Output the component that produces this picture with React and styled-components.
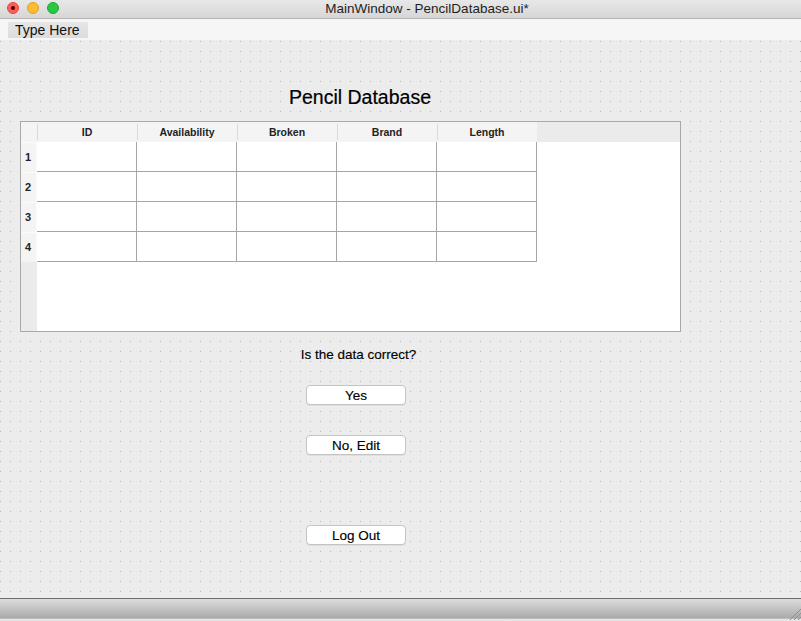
import styled, { createGlobalStyle } from "styled-components";

const COLUMNS = ["ID", "Availability", "Broken", "Brand", "Length"];
const ROWS = [1, 2, 3, 4];

const GlobalStyle = createGlobalStyle`
  * { box-sizing: border-box; }
  html, body { margin: 0; padding: 0; background: #ececec; }
  body { font-family: "Liberation Sans", Arial, sans-serif; color: #1a1a1a; }
`;

export default function App() {
  return (
    <Window>
      <GlobalStyle />
      <TitleBar>
        <Lights>
          <Light $color="#fc5f57" $edge="#de4a43" $dot />
          <Light $color="#fdbc2e" $edge="#dea124" />
          <Light $color="#28c840" $edge="#1fa934" />
        </Lights>
        <WindowTitle>MainWindow - PencilDatabase.ui*</WindowTitle>
      </TitleBar>

      <MenuBar>
        <MenuItem>Type Here</MenuItem>
      </MenuBar>

      <Canvas>
        <Heading>Pencil Database</Heading>

        <Table>
          <Corner />
          {COLUMNS.map((name) => (
            <HeaderCell key={name}>{name}</HeaderCell>
          ))}
          <HeaderFiller />

          {ROWS.map((row) => [
            <RowHeader key={`h${row}`}>{row}</RowHeader>,
            ...COLUMNS.map((name) => <Cell key={`${row}-${name}`} />),
            row === 1 ? <SideFiller key="side" /> : null,
          ])}

          <RowHeaderFiller />
          <BodyFiller />
        </Table>

        <Prompt>Is the data correct?</Prompt>
        <Button $gap={22}>Yes</Button>
        <Button $gap={30}>No, Edit</Button>
        <Button $gap={70}>Log Out</Button>
      </Canvas>

      <StatusBar>
        <Grip width="12" height="14" viewBox="0 0 12 14">
          <path d="M12 3 L1 14 M12 7 L5 14 M12 11 L9 14" stroke="#8e8e8e" strokeWidth="1" />
        </Grip>
      </StatusBar>
    </Window>
  );
}

const Window = styled.div`
  width: 801px;
  height: 621px;
  display: flex;
  flex-direction: column;
  background: #ececec;
  overflow: hidden;
`;

const TitleBar = styled.div`
  height: 19px;
  flex: none;
  display: flex;
  align-items: center;
  position: relative;
  background: linear-gradient(#e8e8e8, #d6d6d6);
  border-bottom: 1px solid #b4b4b4;
`;

const Lights = styled.div`
  position: absolute;
  left: 7px;
  top: 2px;
  display: flex;
  gap: 8px;
`;

const Light = styled.span`
  width: 12px;
  height: 12px;
  border-radius: 50%;
  background: ${({ $color }) => $color};
  border: 1px solid ${({ $edge }) => $edge};
  display: flex;
  align-items: center;
  justify-content: center;

  &::after {
    content: "";
    width: 4px;
    height: 4px;
    border-radius: 50%;
    background: ${({ $dot }) => ($dot ? "#4d0000" : "transparent")};
  }
`;

const WindowTitle = styled.div`
  flex: 1;
  text-align: center;
  padding-left: 53px;
  font-size: 13.5px;
  color: #1e1e1e;
  line-height: 18px;
`;

const MenuBar = styled.div`
  height: 21px;
  flex: none;
  display: flex;
  align-items: center;
  padding: 0 8px;
  background: #f6f6f6;
`;

const MenuItem = styled.div`
  width: 80px;
  height: 16px;
  padding-left: 7px;
  font-size: 14px;
  line-height: 16px;
  color: #111;
  background: linear-gradient(#e6e6e6, #dcdcdc);
`;

const Canvas = styled.div`
  flex: 1;
  display: flex;
  flex-direction: column;
  align-items: flex-start;
  padding-left: 20px;
  background-color: #ececec;
  background-image: radial-gradient(circle at 0.5px 0.5px, #b6b6b6 0.5px, transparent 0.9px);
  background-size: 10px 10px;
  background-position: 0 1px;
`;

const Heading = styled.div`
  margin-top: 45px;
  width: 680px;
  height: 24px;
  text-align: center;
  font-size: 19.5px;
  line-height: 24px;
  color: #000;
  -webkit-text-stroke: 0.2px #000;
`;

const Table = styled.div`
  margin-top: 12px;
  width: 661px;
  height: 211px;
  display: grid;
  grid-template-columns: 16px repeat(5, 100px) 1fr;
  grid-template-rows: 20px repeat(4, 30px) 1fr;
  border: 1px solid #a9a9a9;
  background: #fff;
`;

const Corner = styled.div`
  background: #f4f4f4;
`;

const HeaderCell = styled.div`
  position: relative;
  background: #f4f4f4;
  font-size: 10.5px;
  font-weight: 700;
  color: #222;
  display: flex;
  align-items: center;
  justify-content: center;

  &::before {
    content: "";
    position: absolute;
    left: 0;
    top: 2px;
    bottom: 2px;
    width: 1px;
    background: #dadada;
  }
`;

const HeaderFiller = styled.div`
  background: #ebebeb;
`;

const RowHeader = styled.div`
  background: #f4f4f4;
  border-right: 1px solid #fbfbfb;
  border-top: 1px solid #fbfbfb;
  font-size: 11px;
  font-weight: 700;
  color: #222;
  display: flex;
  align-items: center;
  padding-left: 4px;
  padding-bottom: 1px;
`;

const Cell = styled.div`
  background: #fff;
  border-right: 1px solid #a6a6a6;
  border-bottom: 1px solid #a6a6a6;
`;

const SideFiller = styled.div`
  grid-column: 7;
  grid-row: 2 / 6;
  background: #fff;
`;

const RowHeaderFiller = styled.div`
  grid-column: 1;
  grid-row: 6;
  background: #ebebeb;
`;

const BodyFiller = styled.div`
  grid-column: 2 / -1;
  grid-row: 6;
  background: #fff;
`;

const Prompt = styled.div`
  margin-top: 15px;
  width: 677px;
  text-align: center;
  font-size: 13.5px;
  line-height: 16px;
  color: #000;
  -webkit-text-stroke: 0.15px #000;
`;

const Button = styled.button`
  margin-top: ${({ $gap }) => $gap}px;
  margin-left: 286px;
  width: 100px;
  height: 20px;
  padding: 0;
  border: 1px solid #c4c4c4;
  border-radius: 4px;
  background: #fff;
  box-shadow: 0 1px 0 rgba(0, 0, 0, 0.06);
  font-family: "Liberation Sans", Arial, sans-serif;
  font-size: 13.5px;
  line-height: 19px;
  color: #000;
  -webkit-text-stroke: 0.15px #000;
`;

const StatusBar = styled.div`
  height: 23px;
  flex: none;
  display: flex;
  justify-content: flex-end;
  align-items: flex-end;
  background: linear-gradient(#dcdcdc, #a9a9a9 88%, #e6e6e6 90%, #e6e6e6);
  border-top: 1px solid #6c6c6c;
`;

const Grip = styled.svg`
  display: block;
  margin-bottom: 1px;
`;
